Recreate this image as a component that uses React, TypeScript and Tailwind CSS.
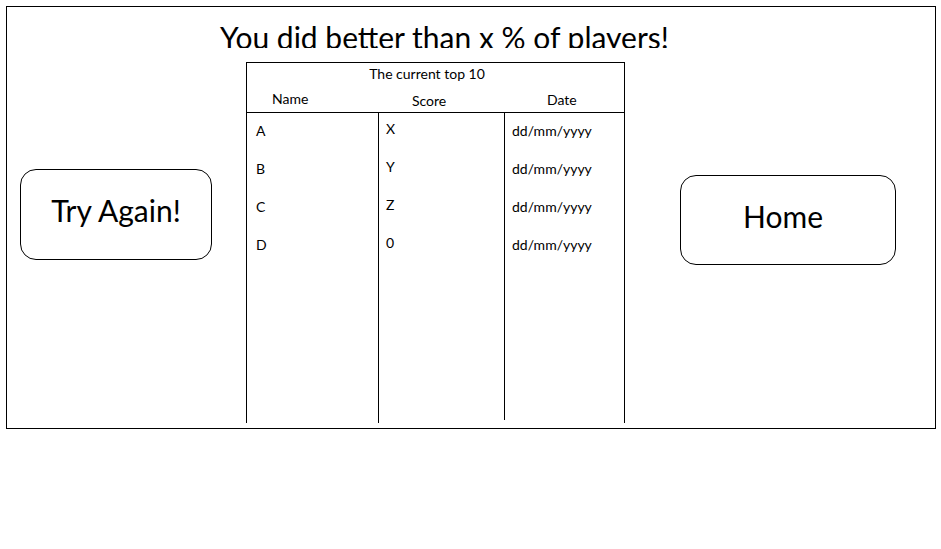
const rows = [
  { name: 'A', score: 'X', date: 'dd/mm/yyyy' },
  { name: 'B', score: 'Y', date: 'dd/mm/yyyy' },
  { name: 'C', score: 'Z', date: 'dd/mm/yyyy' },
  { name: 'D', score: '0', date: 'dd/mm/yyyy' }
];

function ActionButton({ label, className }: { label: string; className: string }) {
  return (
    <button
      type="button"
      className={`flex shrink-0 items-center justify-center rounded-[16px] border border-black bg-white pb-[8px] text-[30px] text-black ${className}`}
    >
      {label}
    </button>
  );
}

function Leaderboard() {
  return (
    <div className="flex h-[361px] w-[379px] shrink-0 flex-col border-x border-t border-black text-[14px] text-black">
      <div className="h-[50px] shrink-0 border-b border-black">
        <div className="pt-[1px] pr-[17px] text-center leading-[20px]">The current top 10</div>
        <div className="flex leading-[20px]">
          <div className="w-[132px] pl-[25px] pt-[5px]">Name</div>
          <div className="w-[126px] pl-[33px] pt-[7px]">Score</div>
          <div className="pl-[42px] pt-[6px]">Date</div>
        </div>
      </div>
      <div className="flex flex-1">
        <div className="w-[132px] border-r border-black pl-[9px] pt-[8px] leading-[20px]">
          {rows.map((r) => (
            <div key={r.name} className="h-[38px]">{r.name}</div>
          ))}
        </div>
        <div className="mb-[3px] w-[126px] border-r border-black pl-[7px] pt-[6px] leading-[20px]">
          {rows.map((r) => (
            <div key={r.name} className="h-[38px]">{r.score}</div>
          ))}
        </div>
        <div className="pl-[7px] pt-[8px] leading-[20px]">
          {rows.map((r) => (
            <div key={r.name} className="h-[38px]">{r.date}</div>
          ))}
        </div>
      </div>
    </div>
  );
}

export default function App() {
  return (
    <div className="h-[549px] w-[941px] bg-white pl-[6px] pt-[6px]" style={{ fontFamily: 'Lato, "Open Sans", sans-serif' }}>
      <div className="h-[423px] w-[930px] border border-black">
        <div className="h-[41px] overflow-hidden pl-[213px] pt-[12px] text-[30px] leading-[36px] text-black">
          You did better than x % of players!
        </div>
        <div className="mt-[14px] flex items-start">
          <ActionButton label="Try Again!" className="ml-[13px] mt-[107px] h-[91px] w-[192px]" />
          <div className="ml-[34px]">
            <Leaderboard />
          </div>
          <ActionButton label="Home" className="ml-[55px] mt-[113px] h-[90px] w-[216px] pr-[10px]" />
        </div>
      </div>
    </div>
  );
}
